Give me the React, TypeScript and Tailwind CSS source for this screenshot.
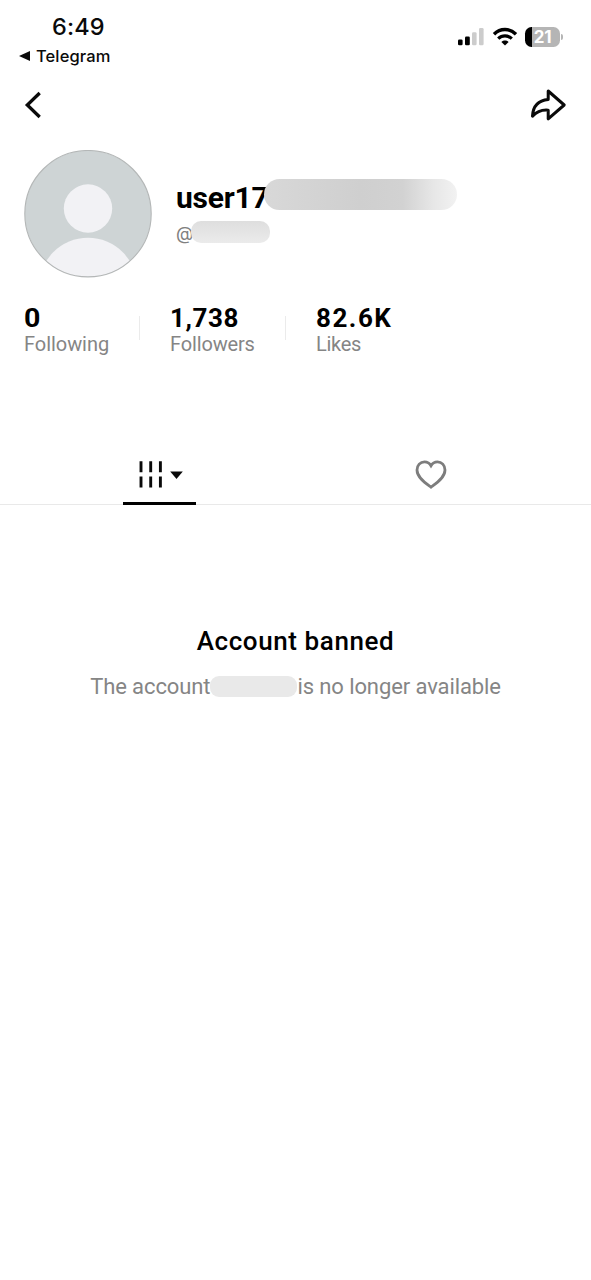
import type { ReactNode } from "react";

type Stat = {
  label: string;
  labelClassName: string;
  value: string;
  valueClassName: string;
};

const stats: Stat[] = [
  {
    label: "Following",
    labelClassName: "tracking-[-0.05px]",
    value: "0",
    valueClassName: "tracking-normal scale-x-110 origin-left"
  },
  {
    label: "Followers",
    labelClassName: "tracking-[-0.15px]",
    value: "1,738",
    valueClassName: "tracking-[0.6px]"
  },
  {
    label: "Likes",
    labelClassName: "tracking-[-0.3px]",
    value: "82.6K",
    valueClassName: "tracking-[1.5px]"
  }
];

function SignalIcon() {
  return (
    <svg width="28" height="20" viewBox="0 0 28 20" aria-hidden="true">
      <rect x="1" y="12.5" width="4.6" height="5.7" rx="1.3" fill="#000" />
      <rect x="8" y="9.5" width="4.8" height="8.7" rx="1.3" fill="#000" />
      <rect x="15" y="5.3" width="4.6" height="12.9" rx="1.3" fill="#ccc" />
      <rect x="22" y="1" width="4.6" height="17.2" rx="1.3" fill="#ccc" />
    </svg>
  );
}

function WifiIcon() {
  return (
    <svg width="26" height="20" viewBox="0 0 26 20" fill="none" aria-hidden="true">
      <path d="M2 7.2C8.2 1 17.8 1 24 7.2" stroke="#000" strokeWidth="3.4" />
      <path d="M6.2 11.7C10.2 7.9 15.8 7.9 19.8 11.7" stroke="#000" strokeWidth="3.2" />
      <path d="M9.4 15C11.5 13.1 14.5 13.1 16.6 15L13 18.6Z" fill="#000" />
    </svg>
  );
}

function Battery() {
  return (
    <div className="flex items-center">
      <div className="flex h-[20px] w-[35px] items-center justify-center rounded-[6.5px] bg-[linear-gradient(90deg,#000_7.5px,#b5b5b5_7.5px)]">
        <span className="font-['Inter',sans-serif] text-[17px] leading-5 font-bold tracking-[-0.3px] text-white">
          21
        </span>
      </div>
      <span className="ml-[1px] h-[6px] w-[2px] rounded-r-full bg-[#b5b5b5]" />
    </div>
  );
}

function StatusBar() {
  return (
    <header className="flex h-[72px] justify-between pr-[28px] pl-[19px] font-['Inter',sans-serif] text-[#0a0a0a]">
      <div className="pt-[12px]">
        <p className="pl-[33px] text-[23.5px] leading-[30px] font-medium tracking-[0.1px]">6:49</p>
        <p className="mt-[4px] flex items-center gap-[6px] text-[16.5px] leading-[20px] font-medium tracking-[0.1px]">
          <svg width="11" height="10" viewBox="0 0 11 10" aria-hidden="true">
            <path d="M0 5L11 0V10Z" fill="currentColor" />
          </svg>
          Telegram
        </p>
      </div>

      <div className="flex items-start gap-[7px] pt-[27px]">
        <SignalIcon />
        <WifiIcon />
        <Battery />
      </div>
    </header>
  );
}

function NavBar() {
  return (
    <nav className="flex h-[66px] items-center justify-between pr-[24px] pl-[24px]">
      <button type="button" aria-label="Back">
        <svg width="18" height="28" viewBox="0 0 18 28" fill="none">
          <path d="M15.7 2L3.3 14L15.7 26" stroke="#0a0a0a" strokeWidth="3.3" />
        </svg>
      </button>
      <button type="button" aria-label="Share">
        <svg width="37" height="34" viewBox="0 0 37 34" fill="none">
          <path
            d="M18.2 3L34.2 17L18.2 30.8V22.2C11.5 21.6 7 23.3 2.5 28.2C3 18.5 8.3 12.5 18.2 11.6Z"
            stroke="#0a0a0a"
            strokeWidth="3"
            strokeLinejoin="round"
          />
        </svg>
      </button>
    </nav>
  );
}

function Avatar() {
  return (
    <svg width="128" height="128" viewBox="0 0 128 128" aria-hidden="true">
      <clipPath id="avatar">
        <circle cx="64" cy="63.7" r="63.2" />
      </clipPath>
      <g clipPath="url(#avatar)">
        <rect width="128" height="128" fill="#ced4d5" />
        <circle cx="64" cy="58.5" r="24.2" fill="#f2f2f5" />
        <circle cx="64" cy="137" r="49.2" fill="#f2f2f5" />
      </g>
      <circle cx="64" cy="63.7" r="63.2" fill="none" stroke="#b4b7b7" strokeWidth="1.1" />
    </svg>
  );
}

function Tab({ active, children, label }: { active?: boolean; children: ReactNode; label: string }) {
  return (
    <button type="button" aria-label={label} className="flex flex-col items-center">
      <span className="flex h-[57px] items-center">{children}</span>
      <span className={active ? "h-[3px] w-[73px] bg-black" : "h-[3px] w-[73px]"} />
    </button>
  );
}

export default function App() {
  return (
    <main className="min-h-screen w-[591px] overflow-hidden bg-white font-['Roboto',sans-serif] text-black">
      <StatusBar />
      <NavBar />

      <section className="flex gap-[24px] pt-[12px] pl-[24px]">
        <Avatar />
        <div className="pt-[29px]">
          <div className="flex h-[36px]">
            <h1 className="w-[93px] text-[30px] leading-[37px] font-bold tracking-[-0.2px]">user17</h1>
            <span className="relative -ml-[5px] h-[31px] w-[193px] rounded-full bg-[linear-gradient(90deg,#d8d8d8,#cfcfcf_50%,#d2d2d2_72%,#e7e7e7_88%,#f2f2f2)]" />
          </div>
          <div className="mt-[6px] flex">
            <span className="w-[18px] font-['Inter',sans-serif] text-[18px] leading-[25px] text-[#808080]">@</span>
            <span className="relative -ml-[3px] h-[22px] w-[79px] rounded-[10px] bg-[linear-gradient(180deg,#dedede,#ebebeb)]" />
          </div>
        </div>
      </section>

      <section className="flex pt-[27px] pl-[24px]">
        {stats.map((stat) => (
          <div key={stat.label} className="group flex w-[146px] justify-between">
            <div>
              <p className={`text-[26px] leading-[26px] font-bold ${stat.valueClassName}`}>{stat.value}</p>
              <p className={`text-[20px] leading-[26px] text-[#858585] ${stat.labelClassName}`}>
                {stat.label}
              </p>
            </div>
            <span className="mt-[11px] mr-[30px] h-[24px] w-px bg-[#ebebeb] group-last:hidden" />
          </div>
        ))}
      </section>

      <section className="mt-[88px] grid h-[60px] grid-cols-[319px_224px] border-b border-[#e9e9e9]">
        <Tab active label="Videos">
          <svg width="46" height="28" viewBox="0 0 46 28" aria-hidden="true">
            <path
              d="M4 1.3V12.3M13.7 1.3V12.3M23.4 1.3V12.3M4 16.6V27.6M13.7 16.6V27.6M23.4 16.6V27.6"
              stroke="#0a0a0a"
              strokeWidth="2.9"
            />
            <path d="M33.2 11.4H45.8L39.5 18.9Z" fill="#0a0a0a" />
          </svg>
        </Tab>
        <Tab label="Liked">
          <svg width="32" height="30" viewBox="0 0 32 30" fill="none" aria-hidden="true">
            <path
              d="M16 28.2C11 24.5 2 18.7 2 11C2 6.2 5.3 2.9 9.5 2.9C12.4 2.9 14.7 4.4 16 6.7C17.3 4.4 19.6 2.9 22.5 2.9C26.7 2.9 30 6.2 30 11C30 18.7 21 24.5 16 28.2Z"
              stroke="#7d7d7d"
              strokeWidth="2.8"
            />
          </svg>
        </Tab>
      </section>

      <section className="pt-[120px]">
        <h2 className="text-center text-[26px] leading-[32px] font-medium tracking-[0.6px]">Account banned</h2>
        <p className="mt-[14px] flex justify-center text-[22px] leading-[32px] tracking-[-0.1px] whitespace-nowrap text-[#858585]">
          <span>The account</span>
          <span className="mt-[5px] h-[21px] w-[87px] rounded-[9px] bg-[#e9e9e9]" />
          <span>is no longer available</span>
        </p>
      </section>
    </main>
  );
}
